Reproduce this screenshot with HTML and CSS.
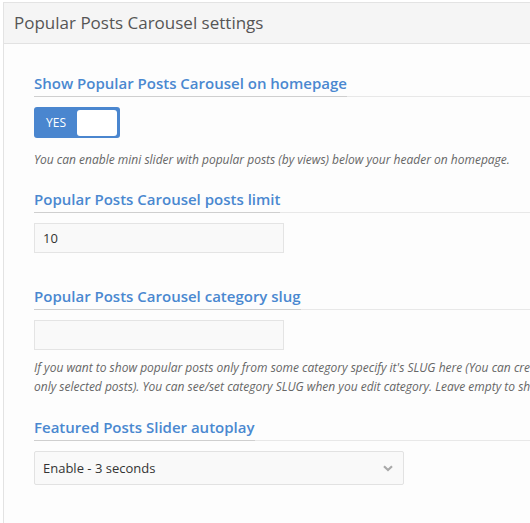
FILE: index.html
```html
<!DOCTYPE html>
<html>
<head>
<meta charset="utf-8">
<link rel="stylesheet" href="styles.css">
</head>
<body>
<div class="panel">
  <div class="panel-header">Popular Posts Carousel settings</div>
  <div class="panel-body">
    <div class="field field-toggle">
      <h3 class="field-title"><span>Show Popular Posts Carousel on homepage</span></h3>
      <div class="toggle"><span class="toggle-label">YES</span><span class="toggle-knob"></span></div>
      <p class="help help-toggle">You can enable mini slider with popular posts (by views) below your header on homepage.</p>
    </div>
    <div class="field field-limit">
      <h3 class="field-title"><span>Popular Posts Carousel posts limit</span></h3>
      <div class="input">10</div>
    </div>
    <div class="field field-slug">
      <h3 class="field-title"><span>Popular Posts Carousel category slug</span></h3>
      <div class="input"></div>
      <p class="help help-slug">If you want to show popular posts only from some category specify it's SLUG here (You can create special category like "Popular" and assign it to<br>only selected posts). You can see/set category SLUG when you edit category. Leave empty to show posts from all categories.</p>
    </div>
    <div class="field field-autoplay">
      <h3 class="field-title"><span>Featured Posts Slider autoplay</span></h3>
      <div class="select">
        <span>Enable - 3 seconds</span>
        <svg class="chevron" width="10" height="7" viewBox="0 0 10 7"><path d="M1 1.2 L5 5 L9 1.2" fill="none" stroke="#a9a9a9" stroke-width="2.2"/></svg>
      </div>
    </div>
  </div>
</div>
</body>
</html>
```
FILE: styles.css
```css
html, body {
  margin: 0;
  padding: 0;
  background: #ffffff;
  overflow: hidden;
  font-family: "Open Sans", "Liberation Sans", sans-serif;
}

.panel {
  margin: 2px 0 0 3px;
  width: 720px;
  min-height: 540px;
  border: 1px solid #e3e3e3;
  background: #fdfdfd;
}

.panel-header {
  height: 40px;
  line-height: 40px;
  padding-left: 10px;
  background: #f5f5f5;
  border-bottom: 1px solid #e2e2e2;
  color: #555555;
  font-size: 17px;
}

.panel-body {
  padding: 29px 0 20px 30px;
}

.field-title {
  margin: 0;
  padding-bottom: 3px;
  border-bottom: 1px solid #e8e8e8;
  font-size: 15px;
  font-weight: 600;
  line-height: 20px;
  color: #4a88d0;
}

.field-title span {
  display: inline-block;
  padding-bottom: 3px;
  margin-bottom: -4px;
  border-bottom: 1px solid #cfcfcf;
}

.toggle {
  margin-top: 10px;
  width: 86px;
  height: 31px;
  box-sizing: border-box;
  border-radius: 3px;
  background: #4a86cf;
  display: flex;
  align-items: center;
  justify-content: space-between;
  padding: 0 3px 0 12px;
}

.toggle-label {
  color: #ffffff;
  font-size: 12px;
}

.toggle-knob {
  width: 40px;
  height: 26px;
  border-radius: 3px;
  background: #ffffff;
}

.help {
  margin: 0;
  font-size: 12px;
  font-style: italic;
  line-height: 19px;
  color: #666666;
  white-space: nowrap;
}

.help-toggle {
  margin-top: 12px;
}

.help-slug {
  margin-top: 8px;
}

.field-limit {
  margin-top: 20px;
}

.field-slug {
  margin-top: 33px;
}

.field-autoplay {
  margin-top: 21px;
}

.input {
  margin-top: 10px;
  width: 250px;
  height: 30px;
  box-sizing: border-box;
  border: 1px solid #e4e4e4;
  background: #f9f9f9;
  padding-left: 8px;
  line-height: 28px;
  font-size: 13px;
  color: #333333;
}

.select {
  margin-top: 10px;
  width: 370px;
  height: 34px;
  box-sizing: border-box;
  border: 1px solid #e2e2e2;
  border-radius: 2px;
  background: #f9f9f9;
  padding: 0 10px 0 8px;
  display: flex;
  align-items: center;
  justify-content: space-between;
  font-size: 13px;
  color: #333333;
}
```
